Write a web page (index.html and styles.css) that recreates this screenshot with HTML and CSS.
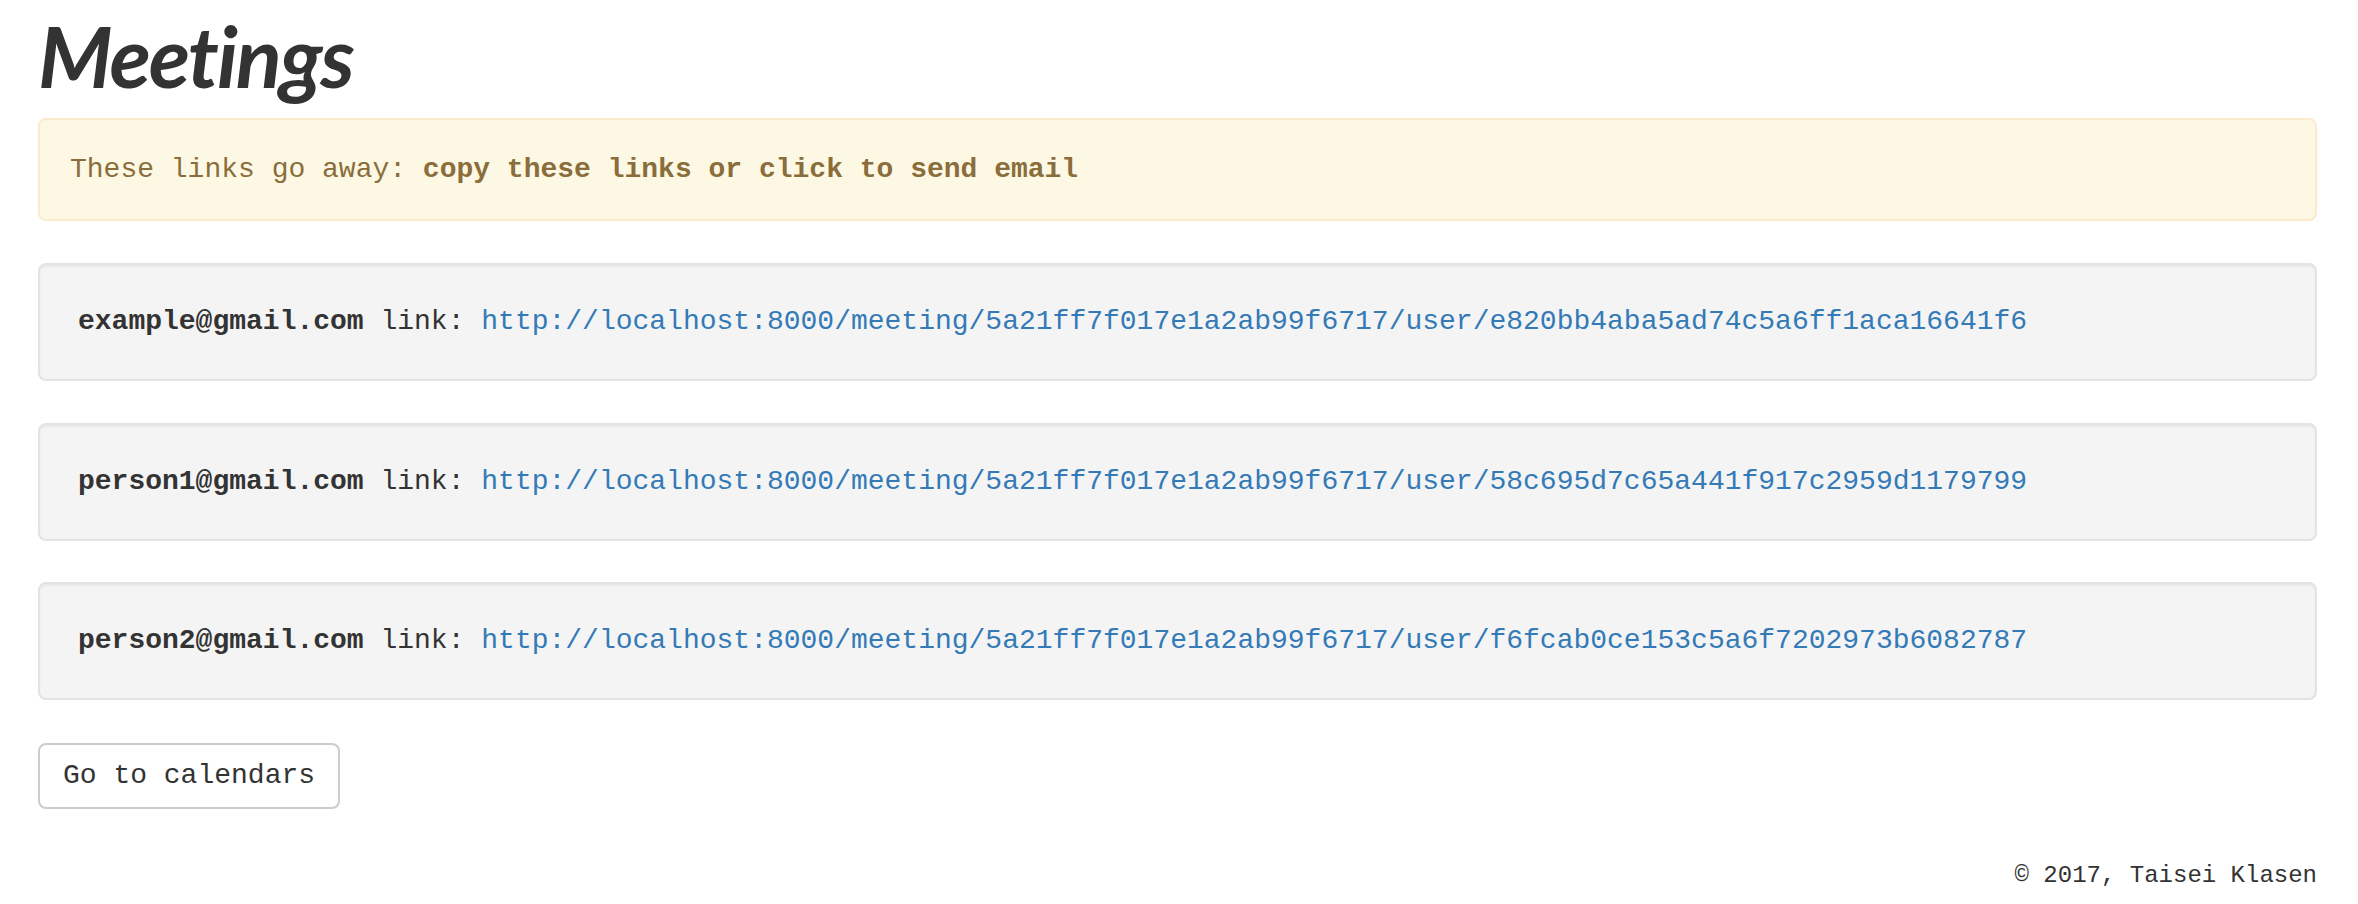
FILE: index.html
```html
<!DOCTYPE html>
<html lang="en">
<head>
<meta charset="utf-8">
<title>Meetings</title>
<link rel="stylesheet" href="styles.css">
</head>
<body>
<div class="page">
  <h1 class="title">Meetings</h1>
  <div class="alert">These links go away: <strong>copy these links or click to send email</strong></div>
  <div class="well"><strong>example@gmail.com</strong> link: <a href="#">http://localhost:8000/meeting/5a21ff7f017e1a2ab99f6717/user/e820bb4aba5ad74c5a6ff1aca16641f6</a></div>
  <div class="well"><strong>person1@gmail.com</strong> link: <a href="#">http://localhost:8000/meeting/5a21ff7f017e1a2ab99f6717/user/58c695d7c65a441f917c2959d1179799</a></div>
  <div class="well"><strong>person2@gmail.com</strong> link: <a href="#">http://localhost:8000/meeting/5a21ff7f017e1a2ab99f6717/user/f6fcab0ce153c5a6f7202973b6082787</a></div>
  <div class="actions"><button class="btn" type="button">Go to calendars</button></div>
  <footer class="footer">© 2017, Taisei Klasen</footer>
</div>
</body>
</html>
```
FILE: styles.css
```css
html, body {
  margin: 0;
  padding: 0;
  background: #ffffff;
}
body {
  font-family: "Liberation Mono", "Courier New", monospace;
  font-size: 28px;
  line-height: 40px;
  color: #333333;
}
.page {
  padding: 0 41px 0 38px;
}
.title {
  font-family: Lato, "Open Sans", sans-serif;
  font-style: italic;
  font-weight: 700;
  font-size: 85px;
  line-height: 85px;
  letter-spacing: -2px;
  margin: 13px 0 20px 0;
  color: #333333;
}
.alert {
  background: #fcf8e3;
  border: 2px solid #faebcc;
  border-radius: 8px;
  color: #8a6d3b;
  padding: 30px 30px 29px 30px;
  margin-bottom: 42px;
}
.alert strong {
  font-weight: 700;
}
.well {
  background: #f4f4f4;
  border: 2px solid #e3e3e3;
  border-radius: 8px;
  box-shadow: inset 0 2px 2px rgba(0, 0, 0, 0.05);
  padding: 37px 38px;
  margin-bottom: 41.5px;
}
.well strong {
  font-weight: 700;
}
.well a {
  color: #337ab7;
  text-decoration: none;
}
.actions {
  padding-top: 1px;
}
.btn {
  font-family: "Liberation Mono", "Courier New", monospace;
  font-size: 28px;
  line-height: 40px;
  color: #333333;
  background: #ffffff;
  border: 2px solid #cccccc;
  border-radius: 8px;
  padding: 11px 23px;
  margin: 0;
  cursor: pointer;
}
.footer {
  text-align: right;
  font-size: 24px;
  line-height: 34px;
  margin-top: 50px;
  color: #333333;
}
```
